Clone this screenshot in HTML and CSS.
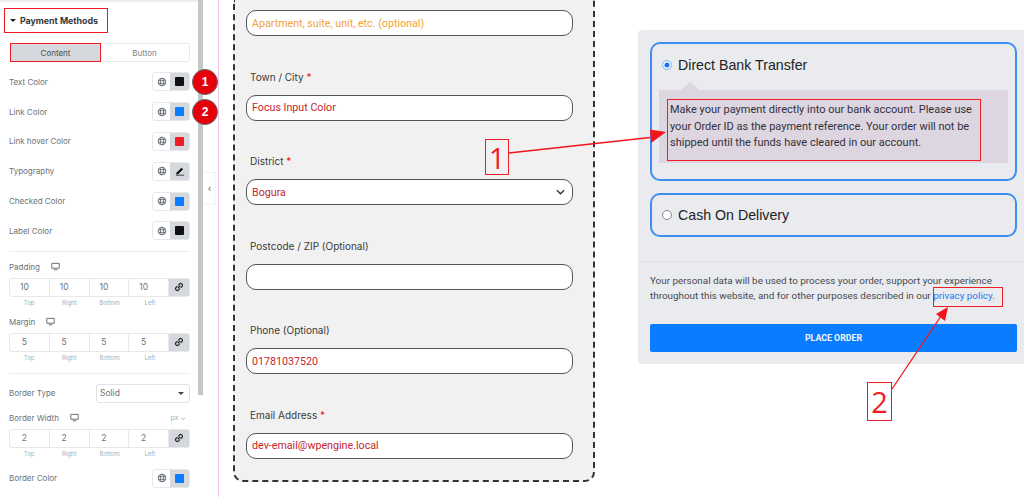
FILE: index.html
```html
<!DOCTYPE html>
<html lang="en">
<head>
<meta charset="utf-8">
<title>Payment Methods</title>
<link rel="stylesheet" href="styles.css">
</head>
<body>
<svg width="0" height="0" class="defs">
  <symbol id="globe" viewBox="0 0 12 12"><g fill="none" stroke="#5f6368" stroke-width="1"><circle cx="6" cy="6" r="4.6"/><ellipse cx="6" cy="6" rx="2" ry="4.6"/><path d="M1.6 4.4h8.8M1.6 7.6h8.8"/></g></symbol>
  <symbol id="monitor" viewBox="0 0 10 10"><path fill="none" stroke="#5f6368" d="M.9 1.5h8.2v5.4H.9z"/><path fill="#5f6368" d="M3 8.2h4v1H3z"/></symbol>
  <symbol id="link" viewBox="0 0 12 12"><g fill="none" stroke="#26282c" stroke-width="1.5"><path d="M5 4l1.5-1.5a2 2 0 0 1 3 3L8 7"/><path d="M7 8l-1.500 1.500a2 2 0 0 1-3-3L4 5"/><path d="M4.500 7.500l3-3"/></g></symbol>
</svg>
<div class="app">
  <aside class="sidebar">
    <h2 class="section"><span class="caret"></span>Payment Methods</h2>
    <div class="tabs"><span class="tab tab-on">Content</span><span class="tab">Button</span></div>
    <div class="row"><span>Text Color</span><span class="widget"><span class="w-globe"><svg class="ic"><use href="#globe"/></svg></span><span class="w-val"><i class="sw sw-black"></i></span></span></div>
    <div class="row"><span>Link Color</span><span class="widget"><span class="w-globe"><svg class="ic"><use href="#globe"/></svg></span><span class="w-val"><i class="sw sw-blue"></i></span></span></div>
    <div class="row"><span>Link hover Color</span><span class="widget"><span class="w-globe"><svg class="ic"><use href="#globe"/></svg></span><span class="w-val"><i class="sw sw-red"></i></span></span></div>
    <div class="row"><span>Typography</span><span class="widget"><span class="w-globe"><svg class="ic"><use href="#globe"/></svg></span><span class="w-val"><svg class="pen" viewBox="0 0 12 12"><path fill="#111" d="M1.500 8.500 7.800 2.200l2 1.800-6.200 5.800H1.500zM1 10.500h10v1H1z"/></svg></span></span></div>
    <div class="row"><span>Checked Color</span><span class="widget"><span class="w-globe"><svg class="ic"><use href="#globe"/></svg></span><span class="w-val"><i class="sw sw-blue"></i></span></span></div>
    <div class="row"><span>Label Color</span><span class="widget"><span class="w-globe"><svg class="ic"><use href="#globe"/></svg></span><span class="w-val"><i class="sw sw-black"></i></span></span></div>
    <hr class="sep sep-a">
    <div class="ctl-label"><span>Padding</span><svg class="mon"><use href="#monitor"/></svg></div>
    <div class="dims"><span>10</span><span>10</span><span>10</span><span>10</span><b><svg class="chain"><use href="#link"/></svg></b></div>
    <div class="dim-names"><span>Top</span><span>Right</span><span>Bottom</span><span>Left</span></div>
    <div class="ctl-label"><span>Margin</span><svg class="mon"><use href="#monitor"/></svg></div>
    <div class="dims"><span>5</span><span>5</span><span>5</span><span>5</span><b><svg class="chain"><use href="#link"/></svg></b></div>
    <div class="dim-names"><span>Top</span><span>Right</span><span>Bottom</span><span>Left</span></div>
    <hr class="sep sep-b">
    <div class="row-select"><span>Border Type</span><span class="select">Solid<i class="sel-caret"></i></span></div>
    <div class="ctl-label ctl-width"><span>Border Width</span><svg class="mon"><use href="#monitor"/></svg><span class="unit">px ⌄</span></div>
    <div class="dims"><span>2</span><span>2</span><span>2</span><span>2</span><b><svg class="chain"><use href="#link"/></svg></b></div>
    <div class="dim-names"><span>Top</span><span>Right</span><span>Bottom</span><span>Left</span></div>
    <div class="row row-last"><span>Border Color</span><span class="widget"><span class="w-globe"><svg class="ic"><use href="#globe"/></svg></span><span class="w-val"><i class="sw sw-blue"></i></span></span></div>
  </aside>
  <div class="scroll"><div class="thumb"></div></div>
  <div class="gutter"><span class="collapse">‹</span></div>

  <main class="stage">
    <section class="form">
      <div class="input input-first ph">Apartment, suite, unit, etc. (optional)</div>
      <label class="lab">Town / City <em>*</em></label>
      <div class="input">Focus Input Color</div>
      <label class="lab">District <em>*</em></label>
      <div class="input input-sel">Bogura<svg class="chev" viewBox="0 0 10 6"><path fill="none" stroke="#333" stroke-width="1.500" d="M1 1l4 4 4-4"/></svg></div>
      <label class="lab">Postcode / ZIP (Optional)</label>
      <div class="input"></div>
      <label class="lab">Phone (Optional)</label>
      <div class="input">01781037520</div>
      <label class="lab">Email Address <em>*</em></label>
      <div class="input">dev-email@wpengine.local</div>
    </section>

    <section class="pay">
      <div class="method method-open">
        <div class="m-head"><span class="radio radio-on"></span>Direct Bank Transfer</div>
        <div class="desc"><p>Make your payment directly into our bank account. Please use your Order ID as the payment reference. Your order will not be shipped until the funds have cleared in our account.</p></div>
      </div>
      <div class="method">
        <div class="m-head"><span class="radio"></span>Cash On Delivery</div>
      </div>
      <hr class="pay-sep">
      <p class="terms">Your personal data will be used to process your order, support your experience throughout this website, and for other purposes described in our <a href="#">privacy policy</a>.</p>
      <button class="order">PLACE ORDER</button>
    </section>
  </main>
</div>

<span class="badge badge-1">1</span>
<span class="badge badge-2">2</span>
<span class="mark mark-privacy"></span>
<span class="num num-1">1</span>
<span class="num num-2">2</span>
<svg class="arrows" viewBox="0 0 1024 497">
  <path d="M509 153 650 137.500" stroke="#f3141c" stroke-width="1.300" fill="none"/>
  <path d="M666 132 650 129.500 651 143z" fill="#f3141c"/>
  <path d="M892 389 941 316" stroke="#f3141c" stroke-width="1.300" fill="none"/>
  <path d="M948 307 936 314 945 321z" fill="#f3141c"/>
</svg>
</body>
</html>
```
FILE: styles.css
```css
* { box-sizing: border-box; }
html, body { margin: 0; height: 497px; overflow: hidden; background: #fff; }
body { position: relative; font-family: "Roboto", "Liberation Sans", sans-serif; }
.defs { position: absolute; }
.app { display: flex; height: 497px; }

/* Sidebar */
.sidebar { width: 198px; flex: none; padding: 0 8px 0 9px; border-top: 2px solid #eceded; color: #6d7278; font-family: "Inter", "Roboto", sans-serif; font-size: 8px; }
.section { display: flex; align-items: center; width: 104px; height: 25px; margin: 6px 0 0 -5px; padding-left: 6px; outline: 1.500px solid #ee1c25; outline-offset: -1px; color: #33373b; font-size: 8.800px; font-weight: 700; white-space: nowrap; }
.caret { width: 0; height: 0; margin-right: 4px; border: 3px solid transparent; border-top: 3px solid #222; border-bottom: 0; }
.tabs { display: flex; height: 19px; margin-top: 10px; margin-left: 1px; border: 1px solid #e6e8ea; border-radius: 2px; }
.tab { flex: 1; display: flex; align-items: center; justify-content: center; color: #7a8087; }
.tab-on { background: #d5d8dc; color: #495157; outline: 1.500px solid #ee1c25; }
.row { display: flex; align-items: center; justify-content: space-between; height: 29.800px; }
.tabs + .row { margin-top: 5px; }
.widget { display: flex; width: 38px; height: 19px; border: 1px solid #e6e8ea; border-radius: 3px; overflow: hidden; }
.w-globe { flex: 1; display: flex; align-items: center; justify-content: center; background: #fff; }
.w-val { width: 19px; display: flex; align-items: center; justify-content: center; background: #d5d8dc; }
.ic { width: 10px; height: 10px; }
.sw { width: 9px; height: 9px; border-radius: 1px; }
.sw-black { background: #111; }
.sw-blue { background: #0a7cff; }
.sw-red { background: #ee1c25; }
.pen { width: 10px; height: 10px; }
.sep { height: 1px; margin: 0; border: 0; background: #eceded; }
.sep-a { margin-top: 5px; }
.sep-b { margin-top: 11px; }
.ctl-label { display: flex; align-items: center; gap: 11px; height: 12px; margin-top: 9px; }
.mon { width: 9px; height: 9px; }
.ctl-label .unit { margin-left: auto; padding-right: 4px; color: #a4afb7; font-size: 7px; }
.dims { display: flex; height: 19px; margin-top: 5px; border: 1px solid #e6e8ea; border-radius: 3px; font-size: 8.500px; }
.dims span { flex: 1; display: flex; align-items: center; justify-content: center; padding-right: 10px; border-right: 1px solid #e6e8ea; color: #6d7278; }
.dims b { width: 20px; flex: none; display: flex; align-items: center; justify-content: center; background: #d5d8dc; }
.chain { width: 10px; height: 10px; }
.dim-names { display: flex; height: 8px; margin-top: 2px; padding-right: 20px; color: #a4afb7; font-size: 6px; }
.dim-names span { flex: 1; text-align: center; }
.row-select { display: flex; align-items: center; justify-content: space-between; margin-top: 10px; }
.select { position: relative; display: flex; align-items: center; width: 94px; height: 19px; padding-left: 3px; border: 1px solid #e0e2e5; border-radius: 3px; font-size: 8.500px; }
.sel-caret { position: absolute; right: 5px; top: 7px; border: 3px solid transparent; border-top: 3px solid #444; border-bottom: 0; }
.ctl-width { margin-top: 9px; }
.row-last { height: 19px; margin-top: 11px; }

/* Scrollbar and gutter */
.scroll { width: 5px; flex: none; }
.thumb { width: 5px; height: 395px; background: #c4c6c8; }
.gutter { position: relative; width: 16px; flex: none; border-right: 1px solid #f3c4f3; }
.collapse { position: absolute; left: 1px; top: 172px; display: flex; align-items: center; justify-content: center; width: 12px; height: 33px; background: #fff; border: 1px solid #f4f4f4; border-left: 0; color: #666; font-size: 11px; }

/* Form */
.stage { flex: 1; display: flex; align-items: flex-start; padding-left: 14px; }
.form { width: 362px; flex: none; height: 482px; padding: 10px 20px 0 11px; background: #f1f1f1; border: 2px dashed #333; border-top: 0; border-radius: 0 0 10px 10px; }
.lab { display: block; height: 12px; margin: 34.600px 0 12px 4px; color: #3a3a3a; font-family: "Inter", sans-serif; font-size: 10px; line-height: 12px; }
.lab em { color: #e01b1b; font-style: normal; }
.input { display: flex; align-items: center; justify-content: space-between; height: 26px; padding: 0 5px; background: #fff; border: 1px solid #555; border-radius: 10px; color: #c2272d; font-family: "Roboto", sans-serif; font-size: 10.700px; }
.ph { color: #f2a33c; }
.chev { width: 9px; height: 6px; margin-right: 2px; }

/* Payment */
.pay { width: 386px; flex: none; height: 334px; margin: 30px 0 0 43px; padding: 12px 7px 0 12px; background: #e9ebef; border-radius: 4px 0 0 4px; }
.method { height: 44px; margin-bottom: 12px; padding: 0 8px; border: 2px solid #3d8ef2; border-radius: 10px; }
.method-open { height: 139px; }
.m-head { display: flex; align-items: center; height: 40px; color: #222; font-family: "Liberation Sans", sans-serif; font-size: 14.200px; }
.method-open .m-head { height: 42px; }
.radio { width: 10px; height: 10px; margin: 0 6px 0 2px; background: #fff; border: 1px solid #888; border-radius: 50%; }
.radio-on { background: #1a76f0; border: 1px solid #9cc4f8; box-shadow: inset 0 0 0 1.500px #fff; }
.desc { position: relative; height: 73px; margin: 4px -1px 0; padding: 9px 8px 0; background: #ddd5e0; }
.desc::before { content: ""; position: absolute; left: 22px; top: -8px; border: 9px solid transparent; border-top: 0; border-bottom: 8px solid #ddd5e0; }
.desc p { height: 62px; margin: 0; padding: 3px 0 0 3px; outline: 1.500px solid #ee1c25; outline-offset: -1px; color: #33303a; font-size: 11px; line-height: 16.500px; width: 314px; }
.pay-sep { height: 1px; margin: 24px -7px 0 -12px; border: 0; background: #e0e2e6; }
.terms { margin: 11px 0 0; color: #474a50; font-size: 9.900px; line-height: 15px; }
.terms a { color: #1a7cf2; text-decoration: none; }
.order { display: block; width: 100%; height: 28px; margin-top: 21px; border: 0; border-radius: 2px; background: #0a7cff; color: #f2f6ff; font-family: "Roboto", sans-serif; font-size: 8.800px; font-weight: 700; }

/* Annotations laid over the shot */
.badge { position: absolute; display: flex; align-items: center; justify-content: center; width: 26px; height: 26px; background: #e6000a; border: 1.500px solid #666; border-radius: 50%; color: #fff; font-family: "Liberation Sans", sans-serif; font-size: 12px; font-weight: 700; }
.badge-1 { left: 192px; top: 69px; }
.badge-2 { left: 192px; top: 99px; }
.mark { position: absolute; border: 1.500px solid #ee1c25; }
.mark-privacy { left: 933px; top: 287px; width: 70px; height: 20px; }
.num { position: absolute; display: flex; align-items: center; justify-content: center; border: 1.500px solid #ee1c25; color: #ee1c25; font-family: "Open Sans", sans-serif; font-size: 29px; }
.num-1 { left: 485px; top: 139px; width: 24px; height: 36px; }
.num-2 { left: 867px; top: 382px; width: 25px; height: 39px; }
.arrows { position: absolute; left: 0; top: 0; width: 1024px; height: 497px; pointer-events: none; }
```
